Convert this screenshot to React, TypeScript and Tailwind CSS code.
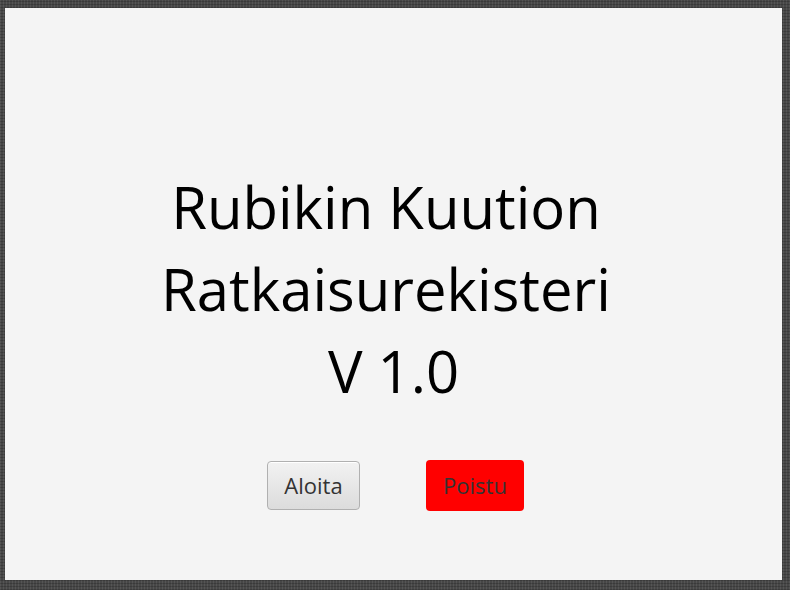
import React from "react";

export default function App() {
  return (
    <div
      className="w-[790px] h-[590px] bg-[#474747] pl-[5px] pt-[8px] pr-[8px] pb-[10px]"
      style={{
        backgroundImage:
          "repeating-linear-gradient(0deg, rgba(0,0,0,0.18) 0px, rgba(0,0,0,0.18) 1px, transparent 1px, transparent 3px), repeating-linear-gradient(90deg, rgba(255,255,255,0.08) 0px, rgba(255,255,255,0.08) 1px, transparent 1px, transparent 3px)",
      }}
    >
      <div className="w-full h-full bg-[#f4f4f4] flex flex-col items-center font-['Open_Sans',sans-serif]">
        <div className="mt-[158px] text-center text-[58px] leading-[82px] text-black whitespace-pre">
          <div>{"Rubikin Kuution "}</div>
          <div>{"Ratkaisurekisteri "}</div>
          <div>V 1.0</div>
        </div>
        <div className="mt-[49px] flex gap-[66px] ml-[4px]">
          <button className="w-[93px] h-[49px] rounded-[4px] border border-[#b0b0b0] bg-gradient-to-b from-[#f2f2f2] to-[#dcdcdc] text-[22px] text-[#333] shadow-[inset_0_1px_0_#fff]">
            Aloita
          </button>
          <button className="w-[98px] h-[51px] rounded-[4px] bg-[#ff0000] text-[22px] text-[#333] mt-[-1px]">
            Poistu
          </button>
        </div>
      </div>
    </div>
  );
}
